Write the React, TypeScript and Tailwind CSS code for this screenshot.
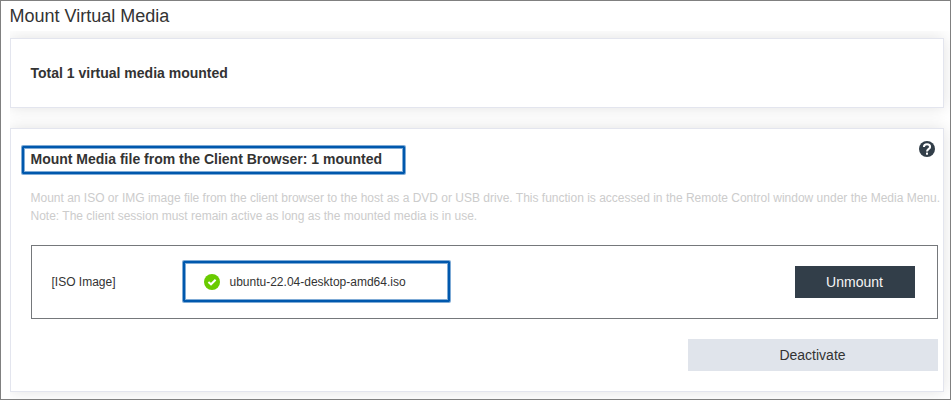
import React from "react";

const Highlight = ({ className }: { className: string }) => (
  <div
    className={`absolute pointer-events-none rounded-[1px] border-2 border-[#0058ad] shadow-[0_0_0_1px_#0058ad80,inset_0_0_0_1px_#0058ad80] ${className}`}
  />
);

const HelpIcon = () => (
  <svg className="size-4" viewBox="0 0 16 16">
    <circle cx="8" cy="8" r="8" fill="#323e49" />
    <path
      d="M4.900 6C4.900 4.200 6.200 3.200 8 3.200S11.100 4.300 11.100 5.900C11.100 7.900 8 8 8 10.600"
      fill="none"
      stroke="#fff"
      strokeWidth="2"
    />
    <rect x="7" y="11.600" width="2" height="2.100" fill="#fff" />
  </svg>
);

const CheckIcon = () => (
  <svg className="size-4" viewBox="0 0 16 16">
    <circle cx="8" cy="8" r="8" fill="#69cb00" />
    <path d="M4.400 8L7 10.300L11.600 5.700" fill="none" stroke="#fff" strokeWidth="2" />
  </svg>
);

const card = "border border-[#e3e5ee] bg-white shadow-[0_0_15px_rgba(0,0,0,0.12)]";

export default function App() {
  return (
    <div className="h-[400px] w-[951px] border border-[#808080] bg-white pl-[9px] font-['Liberation_Sans',Arial,sans-serif] text-[#333333]">
      <h1 className="-ml-[0.5px] h-[30px] pt-[2px] text-lg leading-[27px]">Mount Virtual Media</h1>
      <div className="flex h-[368px] flex-col gap-5 overflow-hidden pt-[7px] pr-[6px]">
        <section className={`flex h-[70px] shrink-0 items-center pl-[19.5px] ${card}`}>
          <h2 className="text-sm font-bold">Total 1 virtual media mounted</h2>
        </section>
        <section className={`h-[264px] shrink-0 pl-5 pr-[5px] ${card}`}>
          <div className="flex h-[60px] items-start justify-between">
            <div className="relative -ml-px mt-5">
              <h2 className="pl-[0.5px] text-sm font-bold">Mount Media file from the Client Browser: 1 mounted</h2>
              <Highlight className="-left-2 -top-[3px] h-[28px] w-[383px]" />
            </div>
            <div className="mt-3 mr-[3px]">
              <HelpIcon />
            </div>
          </div>
          <p className="-ml-[0.5px] h-[56px] text-xs leading-[18px] whitespace-nowrap text-[#cccccc]">
            Mount an ISO or IMG image file from the client browser to the host as a DVD or USB drive. This function is accessed in the Remote Control window under the Media Menu.
            <br />
            Note: The client session must remain active as long as the mounted media is in use.
          </p>
          <div className="flex h-[74px] items-center border border-[#75787b] pl-[19.5px] pr-[22px] text-xs">
            <span className="w-[152.5px]">[ISO Image]</span>
            <div className="relative flex items-center gap-[9.5px]">
              <CheckIcon />
              <span>ubuntu-22.04-desktop-amd64.iso</span>
              <Highlight className="-left-[21px] -top-[13px] h-[41px] w-[267px]" />
            </div>
            <button className="ml-auto h-8 w-[120px] bg-[#323e49] pr-px text-sm text-[#f5f5f5]">Unmount</button>
          </div>
          <div className="mt-5 flex justify-end">
            <button className="h-8 w-[250px] bg-[#e0e4eb] pr-px text-sm">Deactivate</button>
          </div>
        </section>
      </div>
    </div>
  );
}
